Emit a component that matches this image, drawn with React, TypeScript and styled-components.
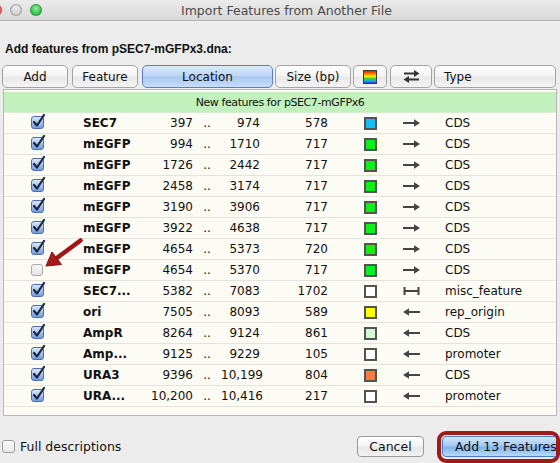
import styled, { createGlobalStyle } from "styled-components";

const GlobalStyle = createGlobalStyle`
  html, body {
    margin: 0;
    padding: 0;
    background: #ececec;
  }
  body {
    font-family: "DejaVu Sans", Verdana, sans-serif;
    color: #111;
  }
`;

type Dir = "right" | "left" | "span";

interface IFeature {
  on: boolean;
  name: string;
  start: string;
  end: string;
  size: string;
  color: string;
  dir: Dir;
  type: string;
}

const features: IFeature[] = [
  { on: true, name: "SEC7", start: "397", end: "974", size: "578", color: "#14bdf2", dir: "right", type: "CDS" },
  { on: true, name: "mEGFP", start: "994", end: "1710", size: "717", color: "#0ff01a", dir: "right", type: "CDS" },
  { on: true, name: "mEGFP", start: "1726", end: "2442", size: "717", color: "#0ff01a", dir: "right", type: "CDS" },
  { on: true, name: "mEGFP", start: "2458", end: "3174", size: "717", color: "#0ff01a", dir: "right", type: "CDS" },
  { on: true, name: "mEGFP", start: "3190", end: "3906", size: "717", color: "#0ff01a", dir: "right", type: "CDS" },
  { on: true, name: "mEGFP", start: "3922", end: "4638", size: "717", color: "#0ff01a", dir: "right", type: "CDS" },
  { on: true, name: "mEGFP", start: "4654", end: "5373", size: "720", color: "#0ff01a", dir: "right", type: "CDS" },
  { on: false, name: "mEGFP", start: "4654", end: "5370", size: "717", color: "#0ff01a", dir: "right", type: "CDS" },
  { on: true, name: "SEC7...", start: "5382", end: "7083", size: "1702", color: "#ffffff", dir: "span", type: "misc_feature" },
  { on: true, name: "ori", start: "7505", end: "8093", size: "589", color: "#ffff00", dir: "left", type: "rep_origin" },
  { on: true, name: "AmpR", start: "8264", end: "9124", size: "861", color: "#d3fad3", dir: "left", type: "CDS" },
  { on: true, name: "Amp...", start: "9125", end: "9229", size: "105", color: "#ffffff", dir: "left", type: "promoter" },
  { on: true, name: "URA3", start: "9396", end: "10,199", size: "804", color: "#ff7a45", dir: "left", type: "CDS" },
  { on: true, name: "URA...", start: "10,200", end: "10,416", size: "217", color: "#ffffff", dir: "left", type: "promoter" },
];

function CheckBox(props: { on: boolean }) {
  if (!props.on) {
    return <EmptyBox />;
  }
  return (
    <svg width="15" height="15" viewBox="0 0 15 15">
      <defs>
        <linearGradient id="cbFill" x1="0" y1="0" x2="0" y2="1">
          <stop offset="0" stopColor="#e3ecfa" />
          <stop offset="0.5" stopColor="#a9c3ec" />
          <stop offset="1" stopColor="#6f98dc" />
        </linearGradient>
      </defs>
      <rect x="0.5" y="2.5" width="12" height="12" rx="2.5" fill="url(#cbFill)" stroke="#4b6fae" />
      <path d="M3 8 L6 11.5 L13 1" fill="none" stroke="#172443" strokeWidth="2.2" strokeLinecap="round" strokeLinejoin="round" />
    </svg>
  );
}

function DirArrow(props: { dir: Dir }) {
  if (props.dir === "span") {
    return (
      <svg width="17" height="12" viewBox="0 0 17 12">
        <path d="M1.5 2 V10 M15.5 2 V10 M1.5 6 H15.5" stroke="#444" strokeWidth="2" fill="none" />
      </svg>
    );
  }
  const flip = props.dir === "left" ? "translate(17 0) scale(-1 1)" : undefined;
  return (
    <svg width="17" height="12" viewBox="0 0 17 12">
      <g transform={flip}>
        <path d="M0 6 H12" stroke="#444" strokeWidth="2" />
        <path d="M11 2.2 L17 6 L11 9.8 Z" fill="#444" />
      </g>
    </svg>
  );
}

function SwapIcon() {
  return (
    <svg width="17" height="13" viewBox="0 0 17 13">
      <path d="M1 3.5 H12" stroke="#333" strokeWidth="2" />
      <path d="M11 0 L16.5 3.5 L11 7 Z" fill="#333" />
      <path d="M5 9.5 H16" stroke="#333" strokeWidth="2" />
      <path d="M6 6 L0.5 9.5 L6 13 Z" fill="#333" />
    </svg>
  );
}

export default function App() {
  return (
    <Window>
      <GlobalStyle />
      <TitleBar>
        <Lights>
          <Light $color="#fc5f57" />
          <Light $color="#d4d4d4" />
          <Light $color="#34c84a" />
        </Lights>
        <Title>Import Features from Another File</Title>
      </TitleBar>

      <Heading>Add features from pSEC7-mGFPx3.dna:</Heading>

      <HeaderBar>
        <HeadButton $w={66} $ml={0}>Add</HeadButton>
        <HeadButton $w={66} $ml={4}>Feature</HeadButton>
        <HeadButton $w={131} $ml={4} $active>Location</HeadButton>
        <HeadButton $w={76} $ml={2}>Size (bp)</HeadButton>
        <HeadButton $w={34} $ml={2}>
          <Rainbow />
        </HeadButton>
        <HeadButton $w={42} $ml={3}>
          <SwapIcon />
        </HeadButton>
        <HeadButton $w={122} $ml={2} $left>Type</HeadButton>
      </HeaderBar>

      <TableBox>
        <Banner>New features for pSEC7-mGFPx6</Banner>
        {features.map((f, i) => (
          <Row key={i}>
            <CheckCell>
              <CheckBox on={f.on} />
            </CheckCell>
            <Name>{f.name}</Name>
            <Num>{f.start}</Num>
            <Dots>..</Dots>
            <Num>{f.end}</Num>
            <Size>{f.size}</Size>
            <IconCell>
              <Swatch style={{ background: f.color }} />
            </IconCell>
            <IconCell>
              <DirArrow dir={f.dir} />
            </IconCell>
            <TypeCell>{f.type}</TypeCell>
          </Row>
        ))}
      </TableBox>

      <Footer>
        <FooterCheck />
        <FooterLabel>Full descriptions</FooterLabel>
        <CancelButton>Cancel</CancelButton>
        <Highlight>
          <AddButton>Add 13 Features</AddButton>
        </Highlight>
      </Footer>

      <Pointer viewBox="38 232 48 38" width="48" height="38">
        <path d="M80.5 240.5 L57.5 257.5" stroke="#a01616" strokeWidth="4.5" strokeLinecap="round" />
        <path d="M46 266 L52 252 L61.5 264.5 Z" fill="#a51a1a" stroke="#8a1010" strokeWidth="1" strokeLinejoin="round" />
      </Pointer>
    </Window>
  );
}

const Window = styled.div`
  position: relative;
  width: 560px;
  height: 463px;
  overflow: hidden;
  background: #ececec;
`;

const TitleBar = styled.div`
  display: flex;
  align-items: center;
  height: 21px;
  box-sizing: border-box;
  background: linear-gradient(#ebebeb, #d8d8d8);
  border-bottom: 1px solid #b2b2b2;
`;

const Lights = styled.div`
  display: flex;
  gap: 8px;
  margin-left: -10px;
`;

const Light = styled.span<{ $color: string }>`
  width: 12px;
  height: 12px;
  border-radius: 50%;
  box-sizing: border-box;
  background: radial-gradient(circle at 50% 35%, #ffffff88, transparent 60%), ${(p) => p.$color};
  border: 1px solid rgba(0, 0, 0, 0.25);
`;

const Title = styled.div`
  margin-left: 139px;
  font-size: 12.5px;
  color: #4a4a4a;
`;

const Heading = styled.div`
  margin: 20px 0 0 5px;
  line-height: 16px;
  font-family: "Liberation Sans", Arial, sans-serif;
  font-weight: bold;
  font-size: 12px;
  color: #111;
`;

const HeaderBar = styled.div`
  display: flex;
  height: 23px;
  margin-top: 8px;
  padding-left: 2px;
`;

const HeadButton = styled.div<{ $w: number; $ml: number; $active?: boolean; $left?: boolean }>`
  flex-shrink: 0;
  width: ${(p) => p.$w}px;
  margin-left: ${(p) => p.$ml}px;
  height: 23px;
  box-sizing: border-box;
  display: flex;
  align-items: center;
  justify-content: ${(p) => (p.$left ? "flex-start" : "center")};
  padding-left: ${(p) => (p.$left ? "9px" : "0")};
  font-size: 12px;
  color: #111;
  border-radius: 5px;
  border: 1px solid ${(p) => (p.$active ? "#5b7fbf" : "#a3a3a3")};
  background: ${(p) =>
    p.$active
      ? "linear-gradient(#dde9fb, #bcd4f5 48%, #a8c7f1 52%, #c9defa)"
      : "linear-gradient(#ffffff, #f3f3f3 48%, #e8e8e8 52%, #f4f4f4)"};
`;

const Rainbow = styled.span`
  width: 14px;
  height: 14px;
  box-sizing: border-box;
  border: 1px solid #3a3a3a;
  background: linear-gradient(#ff1010, #ff8a00 25%, #f5f000 45%, #30d030 65%, #1fb0e0 82%, #2040ff);
`;

const TableBox = styled.div`
  height: 327px;
  margin: 1px 3px 0 3px;
  box-sizing: border-box;
  border: 1px solid #b7b7b7;
  background: #fcfbf4;
  padding-top: 2px;
`;

const Banner = styled.div`
  height: 21px;
  box-sizing: border-box;
  border-bottom: 1px solid #d5ebd2;
  background: #c2f1be;
  display: flex;
  align-items: center;
  justify-content: center;
  font-size: 11px;
  letter-spacing: -0.4px;
  color: #111;
`;

const Row = styled.div`
  display: grid;
  grid-template-columns: 79px 62px 48px 28px 39px 92px 37px 45px 1fr;
  align-items: center;
  height: 21px;
  box-sizing: border-box;
  border-bottom: 1px solid #e3e3df;
  font-size: 12px;
  color: #111;
`;

const CheckCell = styled.div`
  display: flex;
  align-items: center;
  padding-left: 27px;
  margin-top: -3px;
`;

const EmptyBox = styled.span`
  display: block;
  width: 12px;
  height: 12px;
  margin-top: 3px;
  box-sizing: border-box;
  border: 1px solid #a9a9a9;
  border-radius: 3px;
  background: linear-gradient(#fafafa, #e3e3e3);
`;

const Name = styled.div`
  font-weight: bold;
  white-space: nowrap;
`;

const Num = styled.div`
  text-align: right;
  white-space: nowrap;
`;

const Dots = styled.div`
  text-align: center;
`;

const Size = styled.div`
  text-align: right;
  padding-right: 24px;
`;

const IconCell = styled.div`
  display: flex;
  align-items: center;
  justify-content: center;
`;

const Swatch = styled.span`
  width: 13px;
  height: 13px;
  box-sizing: border-box;
  border: 2px solid #535353;
`;

const TypeCell = styled.div`
  padding-left: 11px;
  white-space: nowrap;
`;

const Footer = styled.div`
  display: flex;
  align-items: center;
  height: 33px;
  margin-top: 14px;
  padding-left: 2px;
`;

const FooterCheck = styled.span`
  width: 13px;
  height: 13px;
  box-sizing: border-box;
  border: 1px solid #9c9c9c;
  border-radius: 3px;
  background: linear-gradient(#ffffff, #e6e6e6);
`;

const FooterLabel = styled.span`
  margin-left: 5px;
  font-size: 12.5px;
  color: #111;
`;

const CancelButton = styled.div`
  margin-left: auto;
  width: 67px;
  height: 21px;
  box-sizing: border-box;
  display: flex;
  align-items: center;
  justify-content: center;
  font-size: 12.5px;
  border: 1px solid #9a9a9a;
  border-radius: 4px;
  background: linear-gradient(#ffffff, #f2f2f2 50%, #e6e6e6 52%, #f3f3f3);
`;

const Highlight = styled.div`
  flex-shrink: 0;
  width: 123px;
  height: 32px;
  margin-left: 13px;
  box-sizing: border-box;
  border: 4px solid #9d1b1b;
  border-radius: 9px;
  display: flex;
  align-items: center;
  padding-left: 1px;
  overflow: hidden;
`;

const AddButton = styled.div`
  flex-shrink: 0;
  width: 130px;
  height: 21px;
  box-sizing: border-box;
  display: flex;
  align-items: center;
  padding-left: 12px;
  font-size: 12.5px;
  white-space: nowrap;
  color: #111;
  border: 1px solid #4e7cc4;
  border-radius: 4px;
  background: linear-gradient(#d4e6fc, #a2c8f4 48%, #7fb2ee 52%, #b8d9fb);
`;

const Pointer = styled.svg`
  position: absolute;
  left: 38px;
  top: 232px;
  pointer-events: none;
`;
